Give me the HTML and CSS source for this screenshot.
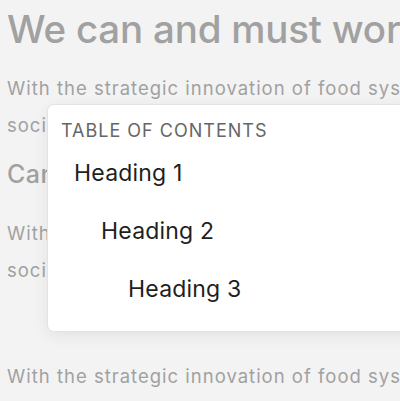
FILE: index.html
```html
<!DOCTYPE html>
<html lang="en">
<head>
  <meta charset="UTF-8">
  <title>Table of Contents</title>
  <link rel="stylesheet" href="styles.css">
</head>
<body>
  <div class="page">
    <h1>We can and must work together</h1>
    <p>With the strategic innovation of food systems, we can tackle our
      societal challenges. This is the food revolution.</p>
    <h2>Can we feed the world?</h2>
    <p>With the strategic innovation of food systems, we can tackle our
      societal challenges.</p>
    <p class="later">With the strategic innovation of food systems, we can tackle our
      societal challenges. This is the food revolution.</p>
  </div>

  <div class="toc">
    <div class="toc-title">TABLE OF CONTENTS</div>
    <ul>
      <li class="level-1">Heading 1</li>
      <li class="level-2">Heading 2</li>
      <li class="level-3">Heading 3</li>
    </ul>
  </div>
</body>
</html>
```

FILE: styles.css
```css
body {
  margin: 0;
  background: #f3f3f3;
  font-family: Inter, "Noto Sans", sans-serif;
  overflow: hidden;
  height: 401px;
}

.page {
  padding: 4px 0 0 7px;
  width: 665px;
  color: #a1a1a1;
}

.page h1 {
  margin: 0;
  font-size: 38.5px;
  font-weight: 500;
  line-height: 50px;
  letter-spacing: -0.2px;
  white-space: nowrap;
}

.page h2 {
  margin: 5px 0 0;
  font-size: 25px;
  font-weight: 500;
  line-height: 50px;
  letter-spacing: 0.5px;
  white-space: nowrap;
}

.page p {
  margin: 16px 0 0;
  font-size: 18.5px;
  line-height: 37px;
  letter-spacing: 1px;
}

.page p.later {
  margin-top: 70px;
  line-height: 34px;
}

.toc {
  position: absolute;
  left: 47px;
  top: 104px;
  width: 400px;
  height: 228px;
  background: #fff;
  border: 1px solid #e3e3e3;
  border-radius: 7px;
  box-shadow: 0 4px 16px rgba(0, 0, 0, 0.07);
  box-sizing: border-box;
  padding: 14px 13px;
}

.toc-title {
  font-size: 18px;
  color: #666;
  line-height: 24px;
  letter-spacing: 1px;
}

.toc ul {
  list-style: none;
  margin: 1px 0 0;
  padding: 0;
}

.toc li {
  font-size: 23px;
  color: #1f1f1f;
  line-height: 58px;
  letter-spacing: 0.2px;
}

.level-1 { padding-left: 13px; }
.level-2 { padding-left: 40px; }
.level-3 { padding-left: 67px; }
```
